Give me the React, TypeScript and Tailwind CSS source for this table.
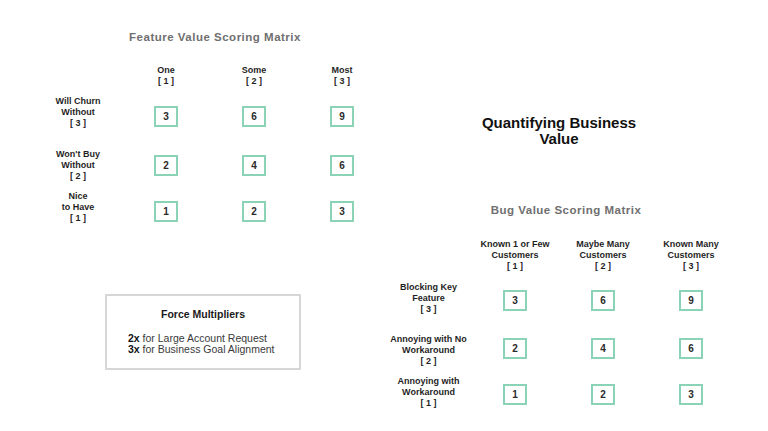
import { FC } from "react";

const font = { fontFamily: '"Liberation Sans", Arial, sans-serif' };

const ScoreBox: FC<{ value: number; className?: string }> = ({ value, className = "" }) => (
  <div className={`flex justify-center ${className}`}>
    <div className="flex h-[21px] w-[24px] items-center justify-center border-2 border-[#8ad3b6] bg-white text-[10px] font-bold text-[#2a2a2a]">
      {value}
    </div>
  </div>
);

const Lines: FC<{ lines: string[] }> = ({ lines }) => (
  <div className="text-center text-[9px] font-bold leading-[11px] text-[#1f1f1f]">
    {lines.map((l) => (
      <div key={l}>{l}</div>
    ))}
  </div>
);

type Row = { label: string[]; values: number[]; rowClass: string; boxClass: string };

const featureCols = [["One", "[ 1 ]"], ["Some", "[ 2 ]"], ["Most", "[ 3 ]"]];
const featureRows: Row[] = [
  { label: ["Will Churn", "Without", "[ 3 ]"], values: [3, 6, 9], rowClass: "mt-[9px]", boxClass: "mt-[7px]" },
  { label: ["Won't Buy", "Without", "[ 2 ]"], values: [2, 4, 6], rowClass: "mt-[20px]", boxClass: "" },
  { label: ["Nice", "to Have", "[ 1 ]"], values: [1, 2, 3], rowClass: "mt-[9px]", boxClass: "mt-[7px]" },
];

const bugCols = [
  ["Known 1 or Few", "Customers", "[ 1 ]"],
  ["Maybe Many", "Customers", "[ 2 ]"],
  ["Known Many", "Customers", "[ 3 ]"],
];
const bugRows: Row[] = [
  { label: ["Blocking Key", "Feature", "[ 3 ]"], values: [3, 6, 9], rowClass: "mt-[10px]", boxClass: "mt-[4px]" },
  { label: ["Annoying with No", "Workaround", "[ 2 ]"], values: [2, 4, 6], rowClass: "mt-[19px]", boxClass: "mb-[4px]" },
  { label: ["Annoying with", "Workaround", "[ 1 ]"], values: [1, 2, 3], rowClass: "mt-[9px]", boxClass: "mt-[4px]" },
];

const Matrix: FC<{ cols: string[][]; rows: Row[]; gridCols: string }> = ({ cols, rows, gridCols }) => (
  <div className="flex flex-col">
    <div className={`grid ${gridCols} items-center`}>
      <div />
      {cols.map((c) => (
        <Lines key={c[0]} lines={c} />
      ))}
    </div>
    {rows.map((r) => (
      <div key={r.label[0]} className={`grid ${gridCols} items-center ${r.rowClass}`}>
        <Lines lines={r.label} />
        {r.values.map((v, i) => (
          <ScoreBox key={i} value={v} className={r.boxClass} />
        ))}
      </div>
    ))}
  </div>
);

export default function App() {
  return (
    <div className="flex h-[431px] w-[768px] overflow-hidden bg-white" style={font}>
      {/* left: feature matrix + multipliers */}
      <div className="flex w-[386px] shrink-0 flex-col pt-[30px]">
        <h2 className="ml-[44px] w-[342px] text-center text-[11.5px] font-bold leading-[14px] tracking-[0.5px] text-[#6f6f6f]">
          Feature Value Scoring Matrix
        </h2>
        <div className="ml-[34px] mt-[21px]">
          <Matrix cols={featureCols} rows={featureRows} gridCols="grid-cols-[88px_88px_88px_88px]" />
        </div>

        <div className="ml-[105px] mt-[70px] flex h-[76px] w-[196px] flex-col border-2 border-[#d6d6d6] pt-[12px]">
          <div className="text-center text-[10.5px] font-bold leading-[12px] text-[#1a1a1a]">Force Multipliers</div>
          <div className="mt-[13px] pl-[21px] text-[10.5px] leading-[11px] text-[#3a3a3a]">
            <div>
              <span className="font-bold text-[#111]">2x</span> for Large Account Request
            </div>
            <div>
              <span className="font-bold text-[#111]">3x</span> for Business Goal Alignment
            </div>
          </div>
        </div>
      </div>

      {/* right: heading + bug matrix */}
      <div className="flex flex-1 flex-col pt-[115px]">
        <h1 className="w-[346px] text-center text-[15px] font-bold leading-[16px] text-[#111]">
          Quantifying Business
          <br />
          Value
        </h1>
        <h2 className="mt-[56px] w-[360px] text-center text-[11.5px] font-bold leading-[14px] tracking-[0.5px] text-[#6f6f6f]">
          Bug Value Scoring Matrix
        </h2>
        <div className="mt-[22px]">
          <Matrix cols={bugCols} rows={bugRows} gridCols="grid-cols-[85px_88px_88px_88px]" />
        </div>
      </div>
    </div>
  );
}
